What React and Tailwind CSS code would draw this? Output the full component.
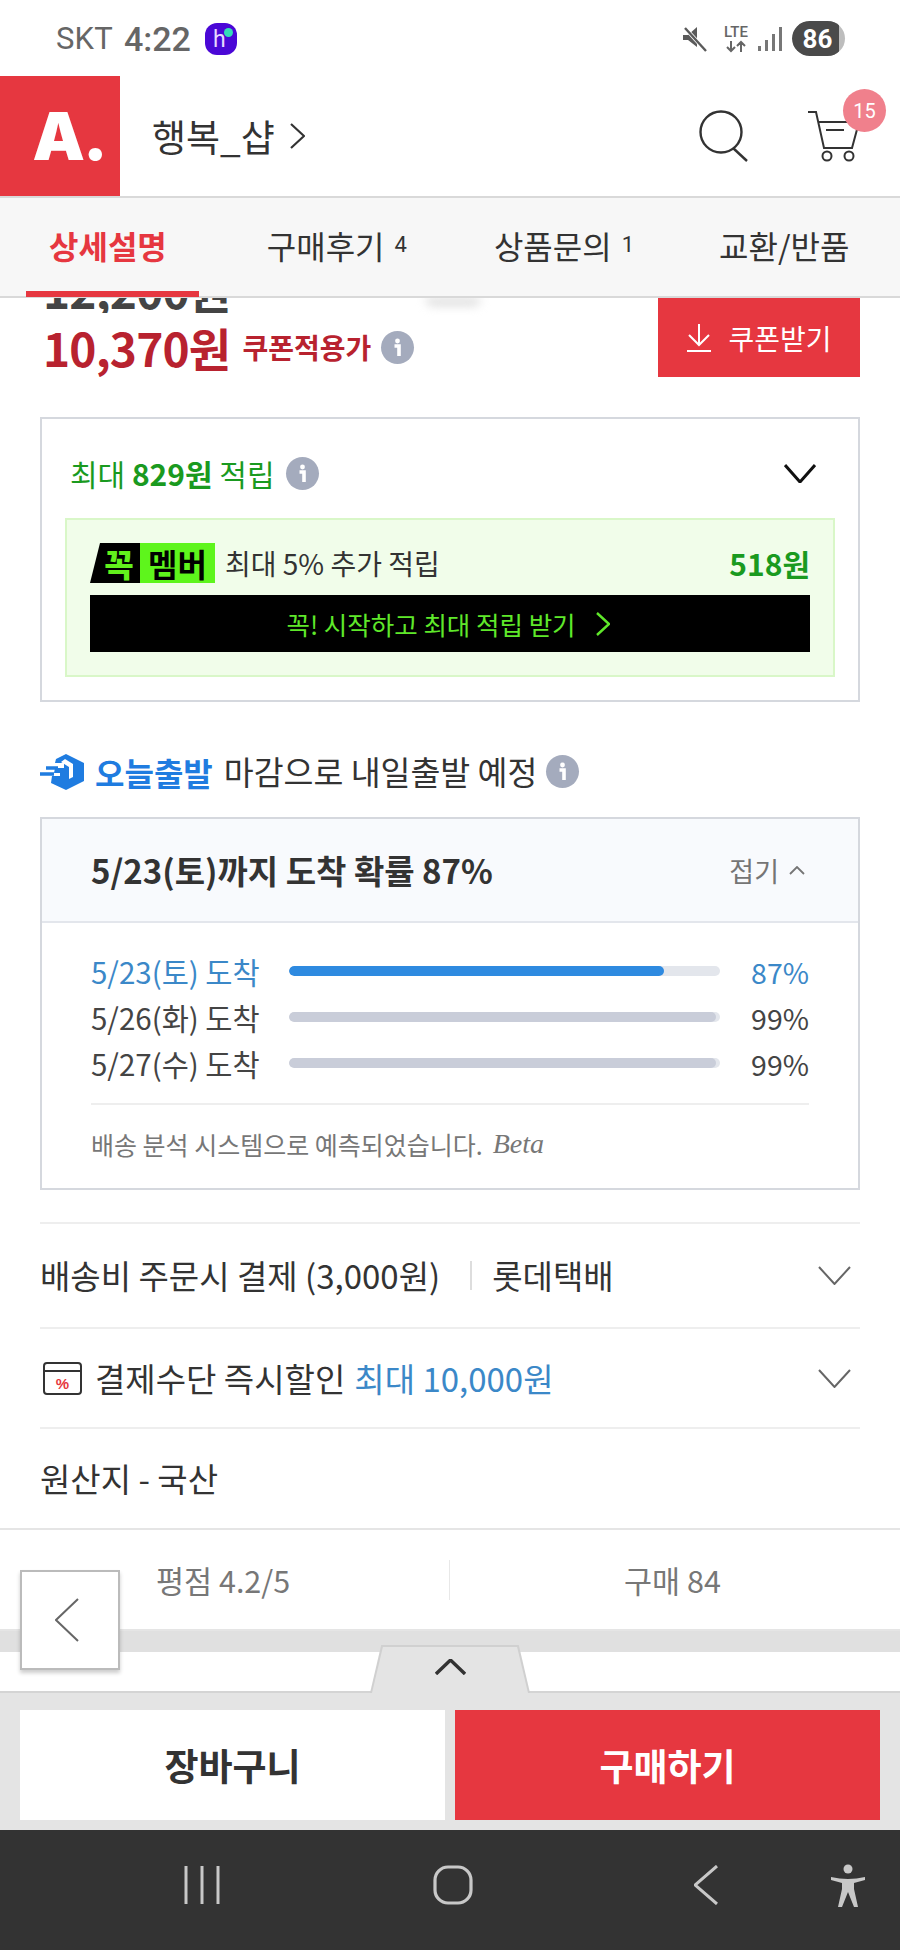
import React from 'react';

const InfoDot = () => (
  <span className="w-[33px] h-[33px] rounded-full bg-[#a4abbd] flex items-center justify-center shrink-0">
    <svg width="33" height="33" viewBox="0 0 33 33">
      <circle cx="16.5" cy="10" r="2.4" fill="#fff" />
      <path d="M13.5 15h4.5v10" fill="none" stroke="#fff" strokeWidth="3.6" />
    </svg>
  </span>
);

const Chevron = ({ dir = 'down', w = 33, h = 18, color = '#555', sw = 2 }) => {
  const d = {
    down: `M1 1L${w / 2} ${h - 1}L${w - 1} 1`,
    up: `M1 ${h - 1}L${w / 2} 1L${w - 1} ${h - 1}`,
    right: `M1 1L${w - 1} ${h / 2}L1 ${h - 1}`,
    left: `M${w - 1} 1L1 ${h / 2}L${w - 1} ${h - 1}`,
  }[dir];
  return (
    <svg width={w} height={h} viewBox={`0 0 ${w} ${h}`} className="shrink-0">
      <path d={d} fill="none" stroke={color} strokeWidth={sw} />
    </svg>
  );
};

const StatusBar = () => (
  <div className="h-[76px] flex items-center pl-[56px] pr-[55px] pt-[1px] text-[#666]">
    <span className="text-[31px] leading-none font-['Roboto',sans-serif] tracking-[0.2px]">SKT</span>
    <span className="ml-[11px] text-[34px] leading-none font-medium font-['Roboto',sans-serif]">4:22</span>
    <span className="ml-[14px] w-[32px] h-[32px] rounded-[12px] bg-[#4a07d6] relative flex items-center justify-center">
      <span className="text-[#e6d8ff] text-[23px] leading-none font-['Roboto',sans-serif] pr-[3px] pt-[2px]">h</span>
      <span className="absolute right-[4px] top-[5px] w-[9px] h-[9px] rounded-full bg-[#35dcb8]" />
    </span>
    <div className="flex-1" />
    <svg width="26" height="28" viewBox="0 0 26 28">
      <path d="M1 10h5l9-8v20l-9-7H1z" fill="#5a5a5a" />
      <path d="M3 3l21 23" stroke="#fff" strokeWidth="4" />
      <path d="M3 3l21 23" stroke="#5a5a5a" strokeWidth="2.4" />
    </svg>
    <div className="ml-[14px] w-[28px] flex flex-col items-center text-[#666]">
      <span className="text-[15px] leading-[15px] font-medium font-['Roboto',sans-serif]">LTE</span>
      <svg width="22" height="13" viewBox="0 0 22 13">
        <path d="M6 1v10M2 7l4 4 4-4M16 12V2M12 6l4-4 4 4" fill="none" stroke="#666" strokeWidth="2" />
      </svg>
    </div>
    <svg className="ml-[8px]" width="24" height="26" viewBox="0 0 24 26">
      <rect x="0" y="20" width="3" height="5" fill="#777" />
      <rect x="7" y="14" width="3" height="11" fill="#777" />
      <rect x="14" y="8" width="3" height="17" fill="#777" />
      <rect x="21" y="1" width="3" height="24" fill="#777" />
    </svg>
    <span className="ml-[10px] w-[53px] h-[35px] rounded-full bg-[#bdbdbd] overflow-hidden">
      <span className="w-[47px] h-[35px] rounded-l-full bg-[#4a4a4a] text-white flex items-center justify-center text-[26px] font-bold leading-none font-['Roboto',sans-serif] pl-[4px]">
        86
      </span>
    </span>
  </div>
);

const Header = () => (
  <div className="h-[120px] flex items-center relative">
    <div className="w-[120px] h-[120px] bg-[#e63740] flex items-center justify-center text-white text-[66px] font-black font-['Inter',sans-serif] leading-none pl-[18px] tracking-[-2px]">
      A.
    </div>
    <span className="ml-[32px] text-[37px] leading-none text-[#333]">행복_샵</span>
    <span className="ml-[15px]">
      <Chevron dir="right" w={15} h={26} color="#333" sw={2.2} />
    </span>
    <div className="flex-1" />
    <svg width="52" height="52" viewBox="0 0 52 52">
      <circle cx="22" cy="22" r="20.5" fill="none" stroke="#333" strokeWidth="2.4" />
      <path d="M34 38l14 13" stroke="#333" strokeWidth="2.4" />
    </svg>
    <svg className="ml-[57px] mr-[40px]" width="52" height="52" viewBox="0 0 52 52">
      <path d="M0 2h8l8 36h28l7-26H10" fill="none" stroke="#333" strokeWidth="2" />
      <path d="M18 20h18" stroke="#333" strokeWidth="2" />
      <circle cx="19" cy="46" r="4.5" fill="none" stroke="#333" strokeWidth="2" />
      <circle cx="41" cy="46" r="4.5" fill="none" stroke="#333" strokeWidth="2" />
    </svg>
    <span className="absolute left-[843px] top-[13px] w-[43px] h-[43px] rounded-full bg-[#f0808c] text-white text-[20px] leading-none flex items-center justify-center font-['Roboto',sans-serif]">
      15
    </span>
  </div>
);

const Tabs = () => (
  <div className="h-[102px] bg-[#f7f7f7] border-y-2 border-[#d9d9d9] relative z-10 flex items-center text-[32px] leading-none text-[#333] pb-[5px]">
    <div className="ml-[49px] text-[#e63740] font-bold">상세설명</div>
    <div className="ml-[100px] flex items-center">구매후기<span className="ml-[10px] text-[22px] font-['Roboto',sans-serif]">4</span></div>
    <div className="ml-[87px] flex items-center">상품문의<span className="ml-[10px] text-[22px] font-['Roboto',sans-serif]">1</span></div>
    <div className="ml-[85px]">교환/반품</div>
    <span className="absolute left-[26px] bottom-[-1px] w-[173px] h-[6px] bg-[#e63740]" />
  </div>
);

const PriceRow = () => (
  <div className="h-[119px] px-[40px] flex justify-between relative">
    <div className="w-[56px] h-[8px] absolute left-[425px] top-0 bg-[#ddd] rounded-b-full blur-[5px]" />
    <div>
      <div className="h-[15px] overflow-hidden">
        <div className="-mt-[32px] ml-[3px] text-[46px] leading-[46px] font-bold text-[#444] tracking-[-0.8px]">12,200원</div>
      </div>
      <div className="flex items-center mt-[11px]">
        <span className="text-[46px] leading-none font-bold text-[#b8222f] ml-[3px] tracking-[-0.8px]">10,370원</span>
        <span className="ml-[12px] text-[28px] leading-none font-bold text-[#b8222f]">쿠폰적용가</span>
        <span className="ml-[10px]"><InfoDot /></span>
      </div>
    </div>
    <div className="w-[202px] h-[79px] bg-[#e63740] flex items-center justify-center text-white text-[28px] leading-none gap-[16px]">
      <svg width="26" height="30" viewBox="0 0 26 30">
        <path d="M13 1v20M3 12l10 10 10-10M1 28h24" fill="none" stroke="#fff" strokeWidth="2" />
      </svg>
      쿠폰받기
    </div>
  </div>
);

const PointBox = () => (
  <div className="mx-[40px] h-[285px] border-2 border-[#d5d8de] pt-[36px] px-[23px]">
    <div className="h-[36px] flex items-center">
      <span className="text-[30px] leading-none text-[#1a9a1f] ml-[5px]">최대 <b className="font-bold">829원</b> 적립</span>
      <span className="ml-[11px]"><InfoDot /></span>
      <div className="flex-1" />
      <span className="mr-[19px]"><Chevron w={32} h={19} color="#111" sw={3} /></span>
    </div>
    <div className="mt-[27px] h-[159px] bg-[#f1fdea] border-2 border-[#d9f7c8] pt-[23px] px-[23px]">
      <div className="h-[40px] flex items-center">
        <div className="w-[125px] h-[40px] flex">
          <span className="w-[50px] h-[40px] bg-black [clip-path:polygon(20%_0,100%_0,100%_100%,0_100%)] text-[#62f01c] text-[32px] font-black leading-none flex items-center justify-center pl-[8px]">꼭</span>
          <span className="w-[75px] h-[40px] bg-[#5ef51c] text-black text-[32px] font-bold leading-none flex items-center justify-center">멤버</span>
        </div>
        <span className="ml-[10px] text-[28px] leading-none text-[#333]">최대 5% 추가 적립</span>
        <div className="flex-1" />
        <span className="text-[30px] leading-none font-bold text-[#1a9a1f]">518원</span>
      </div>
      <div className="mt-[12px] h-[57px] bg-black flex items-center justify-center text-[#5fe82a] text-[25.5px] leading-none gap-[20px] pr-[4px]">
        꼭! 시작하고 최대 적립 받기
        <Chevron dir="right" w={14} h={24} color="#5fe82a" sw={2.4} />
      </div>
    </div>
  </div>
);

const TodayRow = () => (
  <div className="h-[115px] px-[40px] pt-[24px] flex items-center">
    <svg width="44" height="36" viewBox="0 0 44 36" className="shrink-0">
      <path d="M26 0l18 9v18l-18 9-15-7 1-7h8v-3H14l1-5h9V9H15l1-4z" fill="#1f7ce0" />
      <path d="M25 5l8 5v13l-4 2v-12l-8-5z" fill="#fff" />
      <path d="M6 14h12M0 20h14" stroke="#1f7ce0" strokeWidth="3.4" />
    </svg>
    <span className="ml-[11px] text-[32px] leading-none font-bold text-[#1f7ce0]">오늘출발</span>
    <span className="ml-[11px] text-[32.5px] leading-none text-[#333]">마감으로 내일출발 예정</span>
    <span className="ml-[9px]"><InfoDot /></span>
  </div>
);

const rows = [
  { label: '5/23(토) 도착', pct: 87, fill: 87, active: true },
  { label: '5/26(화) 도착', pct: 99, fill: 99 },
  { label: '5/27(수) 도착', pct: 99, fill: 99 },
];

const ArrivalBox = () => (
  <div className="mx-[40px] h-[373px] border-2 border-[#d5d8de]">
    <div className="h-[104px] bg-[#f8fafd] border-b-2 border-[#e3e6ec] pl-[49px] pr-[53px] flex items-center">
      <span className="text-[33px] leading-none font-bold text-[#333]">5/23(토)까지 도착 확률 87%</span>
      <div className="flex-1" />
      <span className="text-[27px] leading-none text-[#757575]">접기</span>
      <span className="ml-[10px]"><Chevron dir="up" w={16} h={9} color="#757575" sw={1.8} /></span>
    </div>
    <div className="px-[49px] pt-[34px]">
      <div className="flex flex-col gap-[16px]">
        {rows.map((r) => (
          <div key={r.label} className={`h-[30px] flex items-center ${r.active ? 'text-[#3b88c8]' : 'text-[#444]'}`}>
            <span className="w-[198px] text-[29.5px] leading-none whitespace-nowrap">{r.label}</span>
            <div className="w-[431px] h-[10px] rounded-full bg-[#e3e6ec] overflow-hidden -mt-[2px]">
              <div
                className={`h-full rounded-full ${r.active ? 'bg-[#2e8ae0]' : 'bg-[#c9cdd9]'}`}
                style={{ width: `${r.fill}%` }}
              />
            </div>
            <div className="flex-1 text-right text-[28.5px] leading-none">{r.pct}%</div>
          </div>
        ))}
      </div>
      <div className="mt-[24px] border-t-2 border-[#eeeeee] h-[80px] flex items-center text-[25px] leading-none text-[#777]">
        배송 분석 시스템으로 예측되었습니다.
        <span className="ml-[10px] font-['Liberation_Serif',serif] italic text-[28px]">Beta</span>
      </div>
    </div>
  </div>
);

const InfoList = () => (
  <div className="mx-[40px] mt-[32px] text-[33px] leading-none text-[#333]">
    <div className="h-[105px] border-t-2 border-[#eeeeee] flex items-center pr-[9px]">
      <span>배송비 주문시 결제 (3,000원)</span>
      <span className="ml-[30px] w-[2px] h-[29px] bg-[#dddddd]" />
      <span className="ml-[20px]">롯데택배</span>
      <div className="flex-1" />
      <Chevron w={33} h={19} color="#666" sw={2} />
    </div>
    <div className="h-[100px] border-t-2 border-[#eeeeee] flex items-center pr-[9px]">
      <svg width="39" height="33" viewBox="0 0 39 33" className="ml-[3px] shrink-0">
        <rect x="1" y="1" width="37" height="31" rx="3" fill="none" stroke="#333" strokeWidth="2" />
        <path d="M1 9h37" stroke="#333" strokeWidth="2" />
        <text x="19.5" y="27" textAnchor="middle" fontSize="15" fontWeight="700" fill="#e63740" fontFamily="Liberation Sans, sans-serif">%</text>
      </svg>
      <span className="ml-[13px]">결제수단 즉시할인</span>
      <span className="ml-[9px] text-[#3b88c8]">최대 10,000원</span>
      <div className="flex-1" />
      <Chevron w={33} h={19} color="#666" sw={2} />
    </div>
    <div className="h-[101px] border-t-2 border-[#eeeeee] flex items-center">
      <span>원산지 - 국산</span>
    </div>
  </div>
);

const StatsBar = () => (
  <div className="h-[103px] border-y-2 border-[#e5e5e5] flex items-start pt-[30px] text-[30.5px] leading-none text-[#777] relative">
    <span className="ml-[156px] w-[293px] h-[40px] flex items-center">평점 4.2/5</span>
    <span className="w-[1px] h-[40px] bg-[#e8e8e8]" />
    <span className="ml-[174px] h-[40px] flex items-center">구매 84</span>
    <div className="absolute left-[20px] top-[40px] z-20 w-[100px] h-[100px] bg-white border-2 border-[#bbbbbb] shadow-[0_3px_4px_rgba(0,0,0,0.2)] flex items-center justify-center pr-[6px]">
      <Chevron dir="left" w={24} h={44} color="#666" sw={2} />
    </div>
  </div>
);

const BottomBar = () => (
  <div className="bg-[#e4e4e4]">
    <div className="h-[21px] bg-[#e0e0e0]" />
    <div className="h-[41px] bg-white border-b-2 border-[#d4d4d4] relative">
      <div className="absolute left-[370px] bottom-[-2px] w-[160px] h-[48px] bg-[#d0d0d0] [clip-path:polygon(7%_0,93%_0,100%_100%,0_100%)]">
        <div className="absolute inset-[2px] bottom-0 bg-[#e4e4e4] [clip-path:polygon(7%_0,93%_0,100%_100%,0_100%)] flex items-center justify-center pb-[6px]">
          <Chevron dir="up" w={31} h={16} color="#333" sw={3.4} />
        </div>
      </div>
    </div>
    <div className="h-[137px] pt-[17px] px-[20px] flex gap-[10px]">
      <div className="w-[425px] h-[110px] bg-white flex items-center justify-center text-[37px] font-bold leading-none text-[#333]">장바구니</div>
      <div className="w-[425px] h-[110px] bg-[#e63740] flex items-center justify-center text-[37px] font-bold leading-none text-white">구매하기</div>
    </div>
  </div>
);

const NavBar = () => (
  <div className="h-[120px] bg-[#333333] relative flex items-center pb-[10px]">
    <svg className="ml-[184px]" width="36" height="40" viewBox="0 0 36 40">
      <path d="M2 1v38M18 1v38M34 1v38" stroke="#c8c8c8" strokeWidth="3" />
    </svg>
    <svg className="ml-[213px]" width="40" height="40" viewBox="0 0 40 40">
      <rect x="2" y="2" width="36" height="36" rx="13" fill="none" stroke="#c8c8c8" strokeWidth="3.2" />
    </svg>
    <span className="ml-[221px]"><Chevron dir="left" w={24} h={40} color="#c8c8c8" sw={3} /></span>
    <svg className="ml-[112px]" width="36" height="43" viewBox="0 0 36 43">
      <circle cx="18" cy="5" r="4.5" fill="#c8c8c8" />
      <path d="M1 13q17 4 34 0v3l-11 3v6l4 18h-4l-6-15-6 15H8l4-18v-6L1 16z" fill="#c8c8c8" />
    </svg>
  </div>
);

export default function App() {
  return (
    <div className="w-[900px] h-[1950px] overflow-hidden bg-white font-['Noto_Sans_CJK_KR','Noto_Sans',sans-serif]">
      <StatusBar />
      <Header />
      <Tabs />
      <PriceRow />
      <PointBox />
      <TodayRow />
      <ArrivalBox />
      <InfoList />
      <StatsBar />
      <BottomBar />
      <NavBar />
    </div>
  );
}
